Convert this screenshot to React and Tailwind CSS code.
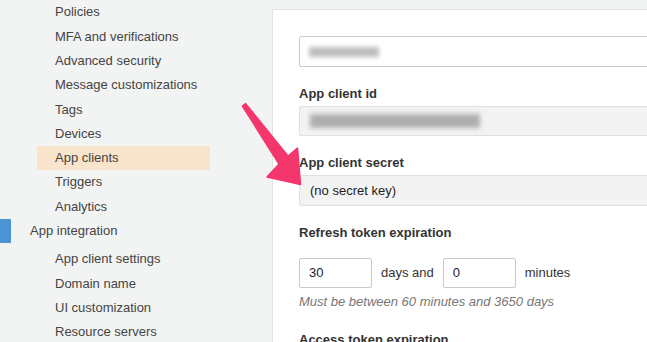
const SUB_ITEMS_TOP = [
  'Policies',
  'MFA and verifications',
  'Advanced security',
  'Message customizations',
  'Tags',
  'Devices',
  'App clients',
  'Triggers',
  'Analytics',
];

const SUB_ITEMS_BOTTOM = [
  'App client settings',
  'Domain name',
  'UI customization',
  'Resource servers',
];

function NavItem({ label, active }) {
  return (
    <div className="h-[24.3px] flex items-center">
      <div
        className={
          'ml-[37px] w-[173px] h-full flex items-center pl-[18px] ' +
          (active ? 'bg-[#f8e5cb]' : '')
        }
      >
        {label}
      </div>
    </div>
  );
}

function Sidebar() {
  return (
    <div className="w-[272px] shrink-0 bg-[#f2f3f3] text-[13px] text-[#444]">
      {SUB_ITEMS_TOP.map((item) => (
        <NavItem key={item} label={item} active={item === 'App clients'} />
      ))}
      <div className="h-[24.3px] flex items-center">
        <div className="w-[11px] h-full bg-[#4b93d2]" />
        <div className="pl-[19px]">App integration</div>
      </div>
      <div className="h-[4px]" />
      {SUB_ITEMS_BOTTOM.map((item) => (
        <NavItem key={item} label={item} />
      ))}
    </div>
  );
}

function Label({ children, className = '' }) {
  return (
    <div className={'text-[13px] leading-[16px] font-bold text-[#333] ' + className}>
      {children}
    </div>
  );
}

function Arrow() {
  // pink callout arrow pointing at the secret field
  return (
    <svg
      className="absolute left-0 top-0 pointer-events-none"
      width="647"
      height="342"
      viewBox="0 0 647 342"
    >
      <polygon
        points="242.4,106.2 245.6,103.6 288,156 297.5,148 300.5,184.5 267,177 279,164"
        fill="#f5366c"
        stroke="#f5366c"
        strokeWidth="1.5"
        strokeLinejoin="round"
      />
    </svg>
  );
}

export default function App() {
  return (
    <div
      className="relative w-[647px] h-[342px] overflow-hidden flex bg-[#f2f3f3]"
      style={{ fontFamily: '"Liberation Sans", Arial, sans-serif' }}
    >
      <Sidebar />
      <div className="flex-1 mt-[9px] bg-white border-l border-t border-[#e3e3e3] pl-[26px] pt-[26px]">
        <div className="w-[400px] h-[31px] border border-[#c9c9c9] rounded-[2px] bg-white flex items-center pl-[9px]">
          <div className="w-[70px] h-[10px] bg-[#bdbdbd] blur-[2px]" />
        </div>

        <Label className="mt-[19px]">App client id</Label>
        <div className="mt-[4px] w-[400px] h-[30px] border border-[#e0e0e0] rounded-[2px] bg-[#f3f3f3] flex items-center pl-[10px]">
          <div className="w-[170px] h-[14px] bg-[#b0adad] blur-[2.5px]" />
        </div>

        <Label className="mt-[19px]">App client secret</Label>
        <div className="mt-[4px] w-[400px] h-[31px] border border-[#e0e0e0] rounded-[2px] bg-[#f3f3f3] flex items-center pl-[10px] text-[13px] text-[#222]">
          (no secret key)
        </div>

        <Label className="mt-[19px]">Refresh token expiration</Label>
        <div className="mt-[17px] flex items-center text-[13px] text-[#333]">
          <div className="w-[73px] h-[30px] border border-[#c9c9c9] rounded-[2px] flex items-center pl-[9px] text-[#222]">
            30
          </div>
          <span className="ml-[9px] mr-[9px]">days and</span>
          <div className="w-[73px] h-[30px] border border-[#c9c9c9] rounded-[2px] flex items-center pl-[9px] text-[#222]">
            0
          </div>
          <span className="ml-[9px]">minutes</span>
        </div>
        <div className="mt-[6px] text-[13px] leading-[16px] italic text-[#777]">
          Must be between 60 minutes and 3650 days
        </div>

        <Label className="mt-[22px]">Access token expiration</Label>
      </div>
      <Arrow />
    </div>
  );
}
